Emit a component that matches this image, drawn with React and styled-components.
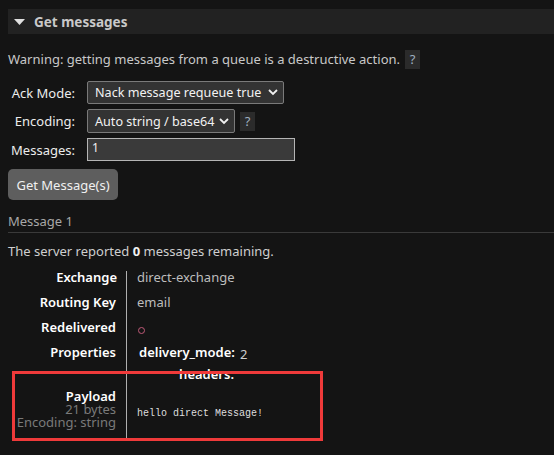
import React from "react";
import styled, { createGlobalStyle } from "styled-components";

const GlobalStyle = createGlobalStyle`
  html, body { margin: 0; padding: 0; background: #141414; }
  body {
    font-family: "Noto Sans", "Open Sans", "Liberation Sans", sans-serif;
    font-size: 13px;
    color: #cfcfcf;
  }
`;

const Page = styled.div`
  position: relative;
  padding: 9px 0 0 8px;
  width: 546px;
  height: 446px;
  overflow: hidden;
`;

const SectionHeader = styled.div`
  display: flex;
  align-items: center;
  gap: 9px;
  height: 25px;
  background: #222222;
  padding-left: 6px;
`;

const Title = styled.h2`
  margin: 0;
  font-size: 13.5px;
  font-weight: 700;
  color: #c9c9c9;
`;

const Warning = styled.p`
  margin: 16px 0 0 0;
  display: flex;
  align-items: center;
  gap: 5px;
  line-height: 19px;
  color: #c8c8c8;
`;

const Help = styled.span`
  display: inline-flex;
  align-items: center;
  justify-content: center;
  width: 15px;
  height: 19px;
  background: #2b2b2b;
  color: #9fb0c0;
  font-size: 13px;
`;

const Form = styled.div`
  display: grid;
  grid-template-columns: 67px auto;
  column-gap: 12px;
  row-gap: 5px;
  margin-top: 12px;
  align-items: center;
`;

const Label = styled.label`
  text-align: right;
  color: #ececec;
  font-size: 13px;
`;

const Field = styled.div`
  display: flex;
  align-items: center;
  gap: 5px;
`;

const Select = styled.div`
  display: flex;
  align-items: center;
  justify-content: space-between;
  box-sizing: border-box;
  width: ${(p) => p.$w}px;
  height: ${(p) => p.$h}px;
  padding: 0 5px 0 7px;
  background: #333333;
  border: 1px solid #7a7a7a;
  border-radius: 2px;
  color: #f2f2f2;
  font-size: 12.6px;
`;

const Input = styled.div`
  box-sizing: border-box;
  width: 208px;
  height: 23px;
  padding: 0 4px;
  background: #3a3a3a;
  border: 1px solid #b5b5b5;
  color: #f0f0f0;
  font-size: 12px;
  line-height: 18px;
`;

const Button = styled.button`
  margin-top: 8px;
  width: 110px;
  height: 31px;
  border: none;
  border-radius: 5px;
  background: #5e5e5e;
  color: #f0f0f0;
  font-family: inherit;
  font-size: 13px;
  padding: 0;
`;

const MessageHeading = styled.h3`
  margin: 12px 0 0 0;
  font-size: 13px;
  font-weight: 400;
  color: #a8a8a8;
  line-height: 18px;
  padding-bottom: 2px;
  border-bottom: 1px solid #3a3a3a;
`;

const Remaining = styled.p`
  margin: 9px 0 0 0;
  line-height: 19px;
  color: #cfcfcf;
  b { color: #f0f0f0; }
`;

const Details = styled.div`
  display: grid;
  grid-template-columns: 119px auto;
  margin-top: 4px;
`;

const Key = styled.div`
  box-sizing: border-box;
  text-align: right;
  padding: ${(p) => p.$pad || "3px 10px 3px 0"};
  border-right: 1px solid #b0b0b0;
  color: #ffffff;
  font-weight: 600;
  line-height: ${(p) => p.$lh || "19px"};
  display: flex;
  flex-direction: column;
  justify-content: ${(p) => (p.$top ? "flex-start" : "center")};
`;

const FirstKey = styled(Key)`
  border-right: none;
  background: linear-gradient(#b0b0b0, #b0b0b0) right 6px / 1px calc(100% - 6px) no-repeat;
`;

const Value = styled.div`
  padding: 3px 0 3px 10px;
  color: #bdbdbd;
  line-height: 19px;
  display: flex;
  align-items: ${(p) => (p.$top ? "flex-start" : "center")};
`;

const Sub = styled.span`
  color: #7a7a7a;
  font-weight: 400;
`;

const Circle = styled.span`
  display: inline-block;
  width: 5px;
  height: 5px;
  border: 1px solid #c05a78;
  border-radius: 50%;
  margin: 5px 0 0 1px;
`;

const Props = styled.div`
  display: grid;
  grid-template-columns: 95px auto;
  column-gap: 6px;
  row-gap: 3px;
  padding-left: 2px;
`;

const PropKey = styled.span`
  text-align: right;
  color: #ffffff;
  font-weight: 600;
`;

const PropVal = styled.span`
  color: #cfcfcf;
  transform: translateY(2px);
`;

const Payload = styled.pre`
  margin: 0;
  font-family: "Liberation Mono", "DejaVu Sans Mono", monospace;
  font-size: 10px;
  color: #dedede;
`;

const Highlight = styled.div`
  position: absolute;
  left: 12px;
  top: 371px;
  width: 311px;
  height: 70px;
  box-sizing: border-box;
  border: 3px solid #ef3a3a;
  pointer-events: none;
`;

const Chevron = () => (
  <svg width="10" height="7" viewBox="0 0 10 7">
    <path d="M1 1 L5 5 L9 1" stroke="#f0f0f0" strokeWidth="1.8" fill="none" />
  </svg>
);

export default function App() {
  return (
    <>
      <GlobalStyle />
      <Page>
        <SectionHeader>
          <svg width="11" height="6" viewBox="0 0 11 6">
            <path d="M0 0 L11 0 L5.5 6 Z" fill="#e0e0e0" />
          </svg>
          <Title>Get messages</Title>
        </SectionHeader>
        <Warning>
          Warning: getting messages from a queue is a destructive action.
          <Help>?</Help>
        </Warning>
        <Form>
          <Label>Ack Mode:</Label>
          <Field>
            <Select $w={197} $h={23}>
              Nack message requeue true
              <Chevron />
            </Select>
          </Field>
          <Label>Encoding:</Label>
          <Field>
            <Select $w={148} $h={24}>
              Auto string / base64
              <Chevron />
            </Select>
            <Help>?</Help>
          </Field>
          <Label>Messages:</Label>
          <Field>
            <Input>1</Input>
          </Field>
        </Form>
        <Button>Get Message(s)</Button>
        <MessageHeading>Message 1</MessageHeading>
        <Remaining>
          The server reported <b>0</b> messages remaining.
        </Remaining>
        <Details>
          <FirstKey>Exchange</FirstKey>
          <Value>direct-exchange</Value>
          <Key>Routing Key</Key>
          <Value>email</Value>
          <Key>Redelivered</Key>
          <Value>
            <Circle />
          </Value>
          <Key $top>Properties</Key>
          <Value $top>
            <Props>
              <PropKey>delivery_mode:</PropKey>
              <PropVal>2</PropVal>
              <PropKey>headers:</PropKey>
              <PropVal></PropVal>
            </Props>
          </Value>
          <Key $pad="3px 10px 10px 0" $lh="13px">
            Payload
            <Sub>21 bytes</Sub>
            <Sub>Encoding: string</Sub>
          </Key>
          <Value>
            <Payload>hello direct Message!</Payload>
          </Value>
        </Details>
        <Highlight />
      </Page>
    </>
  );
}
